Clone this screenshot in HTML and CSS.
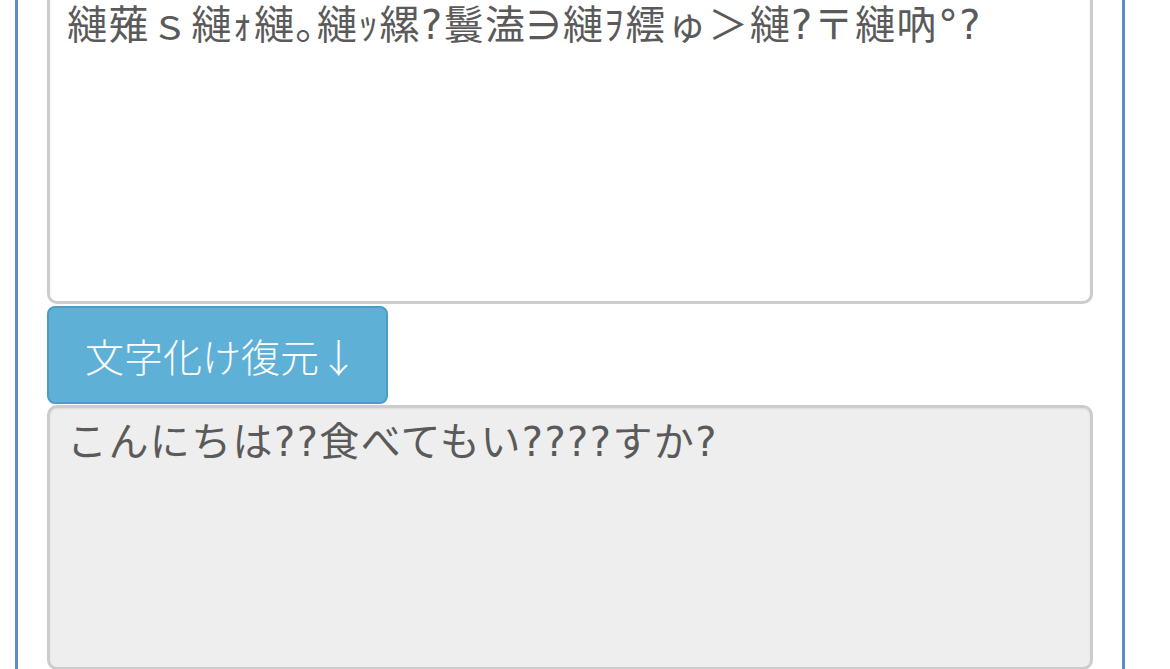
FILE: index.html
```html
<!DOCTYPE html>
<html lang="ja">
<head>
  <meta charset="UTF-8">
  <title>文字化け復元</title>
  <link rel="stylesheet" href="styles.css">
</head>
<body>
  <div class="panel">
    <textarea class="box" id="src">縺薙ｓ縺ｫ縺｡縺ｯ縲?鬟溘∋縺ｦ繧ゅ＞縺?〒縺吶°?</textarea>
    <button class="btn" type="button">文字化け復元↓</button>
    <textarea class="box result" id="dst" readonly>こんにちは??食べてもい????すか?</textarea>
  </div>
</body>
</html>
```

FILE: styles.css
```css
body {
  margin: 0;
  background: #fff;
  font-family: Roboto, "Noto Sans CJK JP", sans-serif;
  overflow: hidden;
}
.panel {
  width: 1110px;
  box-sizing: border-box;
  margin: -15px 0 0 15px;
  padding: 0 29px 40px;
  border: 3px solid #5b8bc8;
  display: flex;
  flex-direction: column;
  align-items: flex-start;
}
.box {
  display: block;
  width: 1046px;
  height: 316px;
  box-sizing: border-box;
  padding: 6px 17px 5px;
  border: 3px solid #ccc;
  border-radius: 10px;
  box-shadow: inset 0 1px 2px rgba(0, 0, 0, 0.075);
  font-family: "DejaVu Sans", "Noto Sans CJK JP", sans-serif;
  font-weight: 400;
  font-size: 40px;
  letter-spacing: 1.4px;
  line-height: 1.4;
  color: #5a5a5a;
  background: #fff;
  resize: none;
  outline: none;
}
.result {
  height: 265px;
  margin-top: 1px;
  background: #eee;
}
.btn {
  margin-top: 2px;
  height: 98px;
  width: 341px;
  box-sizing: border-box;
  padding: 0 0 0 36px;
  border: 2px solid #4c9cc5;
  border-radius: 8px;
  background: #5eb0d6;
  color: #fff;
  font-family: inherit;
  font-weight: 300;
  font-size: 39px;
  white-space: nowrap;
  text-align: left;
}
```
